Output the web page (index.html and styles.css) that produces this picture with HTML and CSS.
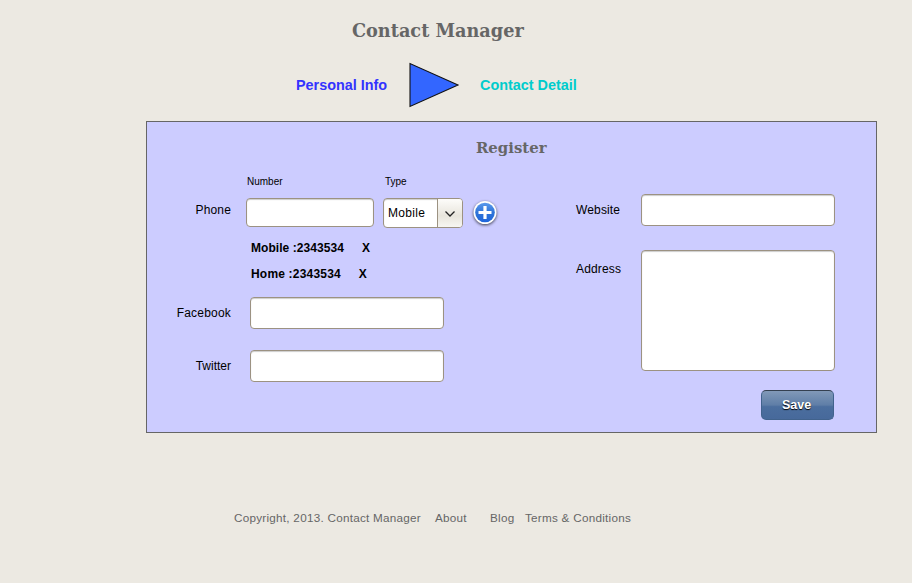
FILE: index.html
```
<!DOCTYPE html>
<html lang="en">
<head>
<meta charset="utf-8">
<title>Contact Manager</title>
<link rel="stylesheet" href="styles.css">
</head>
<body>
<header class="page-header">
  <h1 class="title">Contact Manager</h1>
  <nav class="steps">
    <span class="step step-personal">Personal Info</span>
    <svg class="arrow" width="52" height="46" viewBox="0 0 52 46"><path d="M2 1.5V44.5L50 23Z" fill="#3366ff" stroke="#111" stroke-width="1.1"/></svg>
    <span class="step step-contact">Contact Detail</span>
  </nav>
</header>
<main class="panel">
  <h2 class="subtitle">Register</h2>
  <form class="columns">
    <section class="left">
      <div class="captions"><span class="cap-number">Number</span><span>Type</span></div>
      <div class="row phone-row">
        <label class="label" for="phone">Phone</label>
        <input class="field phone" id="phone">
        <div class="select"><span class="value">Mobile</span><span class="toggle"><svg width="12" height="8" viewBox="0 0 12 8"><path d="M1.500 1.500L6 6L10.500 1.500" fill="none" stroke="#222" stroke-width="1.3"/></svg></span></div>
        <svg class="add" width="30" height="32" viewBox="0 0 30 32">
          <defs><linearGradient id="blue" x1="0" y1="0" x2="0" y2="1"><stop offset="0" stop-color="#5a9aec"/><stop offset=".5" stop-color="#2f74d8"/><stop offset="1" stop-color="#1f66dc"/></linearGradient></defs>
          <circle class="disc" cx="15" cy="15.500" r="11.500" fill="#fff"/>
          <circle cx="15" cy="15.500" r="9.800" fill="url(#blue)"/>
          <path d="M15 9V22M8.500 15.500H21.500" stroke="#fff" stroke-width="3.200"/>
        </svg>
      </div>
      <div class="numbers">
        <div class="entry"><span>Mobile :2343534</span><span class="remove">X</span></div>
        <div class="entry entry-home"><span>Home :2343534</span><span class="remove">X</span></div>
      </div>
      <div class="row social"><label class="label facebook" for="fb">Facebook</label><input class="field wide" id="fb"></div>
      <div class="row social"><label class="label" for="tw">Twitter</label><input class="field wide" id="tw"></div>
    </section>
    <section class="right">
      <div class="row website"><label class="side-label" for="web">Website</label><input class="field wide" id="web"></div>
      <div class="row address"><label class="side-label" for="addr">Address</label><textarea class="field wide area" id="addr"></textarea></div>
      <button class="save" type="button">Save</button>
    </section>
  </form>
</main>
<footer class="footer">
  <span class="copyright">Copyright, 2013. Contact Manager</span>
  <span class="about">About</span>
  <span class="blog">Blog</span>
  <span class="terms">Terms &amp; Conditions</span>
</footer>
</body>
</html>
```

FILE: styles.css
```
* { box-sizing: border-box; }
body {
  margin: 0;
  height: 583px;
  overflow: hidden;
  background: #ece9e2;
  font: 12px/16px "Liberation Sans", Arial, sans-serif;
  color: #000;
}
.page-header { height: 121px; padding-top: 18px; }
.title, .subtitle {
  margin: 0;
  color: #666;
  font-family: "DejaVu Serif", serif;
  font-weight: bold;
  white-space: nowrap;
}
.title { margin-left: 352px; font-size: 17.700px; line-height: 25px; }
.steps { display: flex; align-items: center; height: 46px; margin: 19px 0 0 296px; }
.step { font-size: 14.400px; font-weight: bold; white-space: nowrap; }
.step-personal { width: 112px; color: #3333ff; }
.step-contact { margin-left: 20px; color: #00cccc; }
.panel {
  width: 731px;
  height: 312px;
  margin-left: 146px;
  border: 1px solid #666;
  background: #ccccff;
}
.subtitle { margin: 15px 0 0 329px; font-size: 14.900px; line-height: 22px; }
.columns { display: flex; }
.left { width: 429px; padding-top: 16px; }
.captions { display: flex; padding-left: 100px; font-size: 10px; line-height: 13px; }
.cap-number { width: 138px; }
.row { display: flex; }
.label { width: 84px; text-align: right; }
.phone-row { height: 38px; margin-top: 10px; }
.phone-row .label { margin-top: 4px; letter-spacing: .15px; }
.field {
  display: block;
  border: 1px solid #9c9282;
  border-radius: 4px;
  margin: 0;
  padding: 0 6px;
  background: #fff;
  box-shadow: inset 0 1px 1px #ccc;
  font: inherit;
  outline: none;
  resize: none;
}
.phone { width: 128px; height: 29px; margin-left: 15px; }
.select {
  display: flex;
  width: 80px;
  height: 30px;
  margin-left: 9px;
  border: 1px solid #9c9282;
  border-radius: 4px;
  background: #fff;
  box-shadow: inset 0 1px 1px #ccc;
  overflow: hidden;
}
.value { width: 53px; padding-left: 4px; line-height: 28px; letter-spacing: .3px; }
.toggle {
  display: flex;
  align-items: center;
  justify-content: center;
  flex: 1;
  padding-top: 2px;
  border-left: 1px solid #9c9282;
  background: linear-gradient(#fdfcfa, #e8e5dc 60%, #f7f6f2);
}
.add { margin: -1px 0 0 7px; }
.disc { filter: drop-shadow(0 1px 1.500px rgba(0, 0, 0, .7)); }
.numbers { padding-left: 104px; margin-bottom: 9px; font-weight: bold; }
.entry { display: flex; height: 26px; line-height: 25px; letter-spacing: .06px; }
.entry-home { letter-spacing: .19px; }
.remove { margin-left: 18px; }
.social { margin-bottom: 21px; }
.social .label { padding-top: 8px; }
.facebook { letter-spacing: .2px; }
.wide { width: 194px; height: 32px; }
.social .wide { margin-left: 19px; }
.right { padding-top: 35px; }
.side-label { width: 65px; padding-top: 8px; letter-spacing: .15px; }
.address { margin-top: 24px; }
.address .side-label { padding-top: 11px; }
.area { height: 121px; }
.save {
  display: block;
  width: 73px;
  height: 30px;
  margin: 19px 0 0 185px;
  padding: 0 2px 0 0;
  border: 1px solid #41628c;
  border-top-color: #344050;
  border-radius: 5px;
  background: linear-gradient(#8199b8 0%, #5f7ea7 50%, #4b6e9e 56%, #47699b 100%);
  color: #fff;
  font: bold 12.500px/28px "Liberation Sans", Arial, sans-serif;
  text-shadow: 0 1px 1px #000;
}
.footer { display: flex; margin: 77px 0 0 234px; color: #666; font-size: 11.700px; letter-spacing: .26px; white-space: nowrap; }
.copyright { width: 201px; }
.about { width: 55px; }
.blog { width: 35px; }
```
